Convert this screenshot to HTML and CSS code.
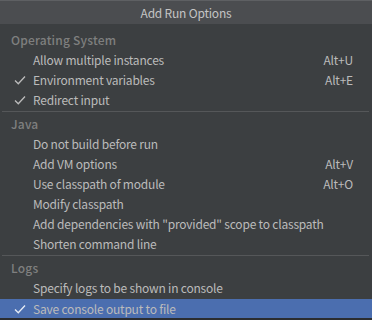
FILE: index.html
```html
<!DOCTYPE html>
<html lang="en">
<head>
    <meta charset="UTF-8">
    <title>Add Run Options</title>
    <link rel="stylesheet" href="styles.css">
</head>
<body>
    <div class="popup">
        <div class="title">Add Run Options</div>
        <div class="list">
            <div class="group">Operating System</div>
            <div class="item"><span class="check"></span><span class="label">Allow multiple instances</span><span class="key">Alt+U</span></div>
            <div class="item"><span class="check"><svg viewBox="0 0 12 10" width="12" height="10"><path d="M1 5.5 L4.3 8.8 L11 1.5" fill="none" stroke="#bbbbbb" stroke-width="1.3"/></svg></span><span class="label">Environment variables</span><span class="key">Alt+E</span></div>
            <div class="item"><span class="check"><svg viewBox="0 0 12 10" width="12" height="10"><path d="M1 5.5 L4.3 8.8 L11 1.5" fill="none" stroke="#bbbbbb" stroke-width="1.3"/></svg></span><span class="label">Redirect input</span><span class="key"></span></div>
            <div class="sep"></div>
            <div class="group">Java</div>
            <div class="item"><span class="check"></span><span class="label">Do not build before run</span><span class="key"></span></div>
            <div class="item"><span class="check"></span><span class="label">Add VM options</span><span class="key">Alt+V</span></div>
            <div class="item"><span class="check"></span><span class="label">Use classpath of module</span><span class="key">Alt+O</span></div>
            <div class="item"><span class="check"></span><span class="label">Modify classpath</span><span class="key"></span></div>
            <div class="item"><span class="check"></span><span class="label">Add dependencies with "provided" scope to classpath</span><span class="key"></span></div>
            <div class="item"><span class="check"></span><span class="label">Shorten command line</span><span class="key"></span></div>
            <div class="sep"></div>
            <div class="group">Logs</div>
            <div class="item"><span class="check"></span><span class="label">Specify logs to be shown in console</span><span class="key"></span></div>
            <div class="item selected"><span class="check"><svg viewBox="0 0 12 10" width="12" height="10"><path d="M1 5.5 L4.3 8.8 L11 1.5" fill="none" stroke="#e6ecf5" stroke-width="1.3"/></svg></span><span class="label">Save console output to file</span><span class="key"></span></div>
        </div>
    </div>
</body>
</html>
```

FILE: styles.css
```css
body {
    margin: 0;
    background: #2b2d30;
    font-family: "Noto Sans CJK KR", "Noto Sans", sans-serif;
    font-size: 12px;
    letter-spacing: -0.2px;
}
.popup {
    width: 372px;
    height: 318px;
    background: #3c3f41;
    color: #bbbbbb;
    overflow: hidden;
}
.title {
    height: 24px;
    line-height: 24px;
    text-align: center;
    background: #4b4d50;
    border-top: 1px solid #5e6063;
    box-sizing: border-box;
    color: #c4c4c4;
}
.list {
    padding-top: 6px;
}
.group {
    height: 20px;
    line-height: 20px;
    padding-left: 11px;
    color: #7f7f7f;
    font-weight: 500;
    letter-spacing: 0.2px;
}
.item {
    display: flex;
    align-items: center;
    height: 20px;
    line-height: 20px;
}
.check {
    display: flex;
    width: 33px;
    padding-left: 14px;
    box-sizing: border-box;
}
.label {
    flex: 1;
}
.key {
    padding-right: 19px;
}
.selected {
    background: #4b6eaf;
    margin-top: 1px;
}
.sep {
    height: 1px;
    margin: 1px 3px 2px 2px;
    background: #555759;
}
```
